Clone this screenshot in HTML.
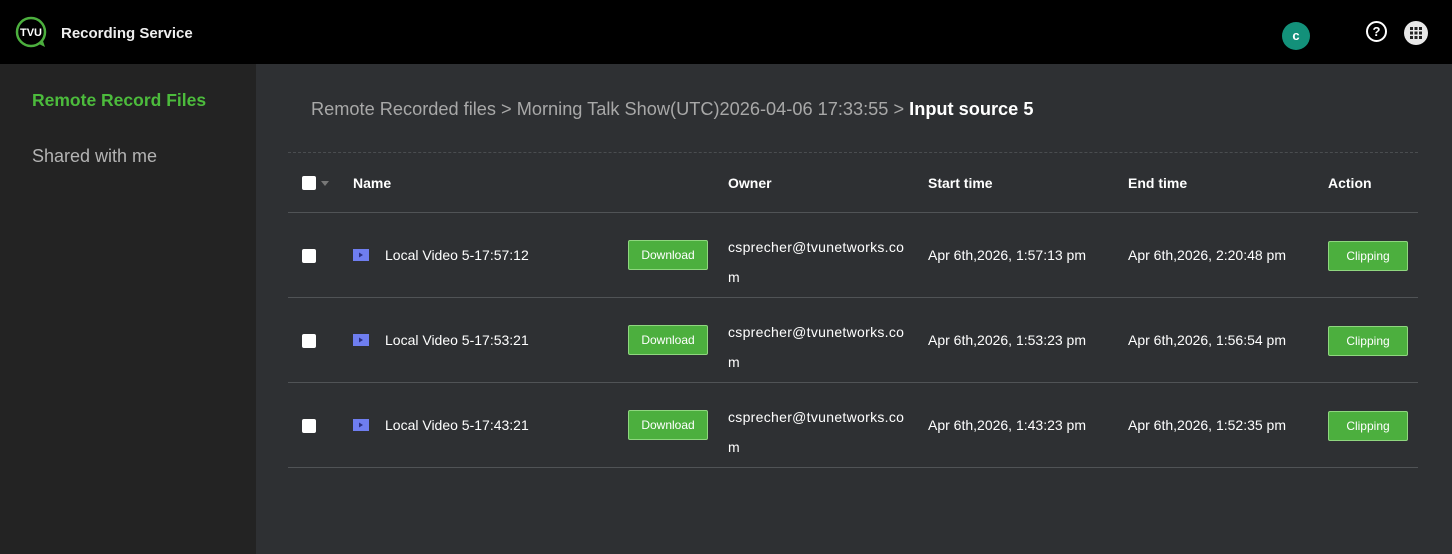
<!DOCTYPE html>
<html><head><style>
*{margin:0;padding:0;box-sizing:border-box}
body{width:1452px;height:554px;background:#2e3033;font-family:"Liberation Sans",sans-serif;overflow:hidden;position:relative;color:#fff}
.top{position:absolute;left:0;top:0;width:1452px;height:64px;background:#000}
.side{position:absolute;left:0;top:64px;width:256px;height:490px;background:#232323}
.abs{position:absolute;white-space:nowrap}
.cb{position:absolute;width:14px;height:14px;background:#fff;border-radius:2px}
.btn{position:absolute;height:30px;width:80px;background:#4caf3e;border:1px solid #8fd67f;border-radius:2px;color:#fff;font-size:12px;text-align:center;line-height:28px}
.line{position:absolute;left:288px;width:1130px;height:1px;background:#505356}
.t{font-size:14px;color:#fff}
.h{font-size:14px;font-weight:bold}
</style></head><body>
<div class="top"></div>
<div class="side"></div>
<svg class="abs" style="left:15px;top:16px" width="34" height="34" viewBox="0 0 34 34"><circle cx="16" cy="16" r="14" fill="none" stroke="#4caf3e" stroke-width="2.5"/><path d="M24 28 L30 31 L28 25Z" fill="#4caf3e"/><text x="16" y="20" font-size="11" fill="#fff" text-anchor="middle" font-family="Liberation Sans" font-weight="bold">TVU</text></svg>
<div class="abs" style="left:61px;top:25px;font-size:15px;font-weight:bold;color:#eee">Recording Service</div>
<div class="abs" style="left:1282px;top:22px;width:28px;height:28px;border-radius:50%;background:#13917a;font-size:13px;font-weight:bold;text-align:center;line-height:28px">c</div>
<div class="abs" style="left:1366px;top:21px;width:21px;height:21px;border-radius:50%;border:2px solid #fff;font-size:13px;font-weight:bold;text-align:center;line-height:17px">?</div>
<div class="abs" style="left:1404px;top:21px;width:24px;height:24px;border-radius:50%;background:#e8e8e8"></div>
<svg class="abs" style="left:1409px;top:26px" width="14" height="14"><g fill="#222"><rect x="1" y="1" width="3" height="3"/><rect x="5.5" y="1" width="3" height="3"/><rect x="10" y="1" width="3" height="3"/><rect x="1" y="5.5" width="3" height="3"/><rect x="5.5" y="5.5" width="3" height="3"/><rect x="10" y="5.5" width="3" height="3"/><rect x="1" y="10" width="3" height="3"/><rect x="5.5" y="10" width="3" height="3"/><rect x="10" y="10" width="3" height="3"/></g></svg>
<div class="abs" style="left:32px;top:90px;font-size:17.5px;font-weight:bold;color:#4cbb3c">Remote Record Files</div>
<div class="abs" style="left:32px;top:146px;font-size:18px;color:#b3b3b3">Shared with me</div>
<div class="abs" style="left:311px;top:99px;font-size:18.2px;color:#a8a8a8">Remote Recorded files &gt; Morning Talk Show(UTC)2026-04-06 17:33:55 &gt; <b style="color:#fff">Input source 5</b></div>
<div class="abs" style="left:288px;top:152px;width:1130px;border-top:1px dashed #4a4d50"></div>
<div class="cb" style="left:302px;top:176px"></div>
<div class="abs" style="left:321px;top:181px;border:4px solid transparent;border-top:5px solid #777"></div>
<div class="abs h" style="left:353px;top:175px">Name</div>
<div class="abs h" style="left:728px;top:175px">Owner</div>
<div class="abs h" style="left:928px;top:175px">Start time</div>
<div class="abs h" style="left:1128px;top:175px">End time</div>
<div class="abs h" style="left:1328px;top:175px">Action</div>
<div class="line" style="top:212px"></div>
<div class="line" style="top:297px"></div>
<div class="line" style="top:382px"></div>
<div class="line" style="top:467px"></div>

<div class="cb" style="left:302px;top:249px"></div>
<svg class="abs" style="left:353px;top:249px" width="16" height="12"><rect width="16" height="12" fill="#6f7ef0"/><path d="M6 3.5 L10 6 L6 8.5Z" fill="#2a2f80"/></svg>
<div class="abs t" style="left:385px;top:247px">Local Video 5-17:57:12</div>
<div class="btn" style="left:628px;top:240px">Download</div>
<div class="abs t" style="left:728px;top:232px;line-height:30px;letter-spacing:0.3px">csprecher@tvunetworks.co<br>m</div>
<div class="abs t" style="left:928px;top:247px">Apr 6th,2026, 1:57:13 pm</div>
<div class="abs t" style="left:1128px;top:247px">Apr 6th,2026, 2:20:48 pm</div>
<div class="btn" style="left:1328px;top:241px">Clipping</div>

<div class="cb" style="left:302px;top:334px"></div>
<svg class="abs" style="left:353px;top:334px" width="16" height="12"><rect width="16" height="12" fill="#6f7ef0"/><path d="M6 3.5 L10 6 L6 8.5Z" fill="#2a2f80"/></svg>
<div class="abs t" style="left:385px;top:332px">Local Video 5-17:53:21</div>
<div class="btn" style="left:628px;top:325px">Download</div>
<div class="abs t" style="left:728px;top:317px;line-height:30px;letter-spacing:0.3px">csprecher@tvunetworks.co<br>m</div>
<div class="abs t" style="left:928px;top:332px">Apr 6th,2026, 1:53:23 pm</div>
<div class="abs t" style="left:1128px;top:332px">Apr 6th,2026, 1:56:54 pm</div>
<div class="btn" style="left:1328px;top:326px">Clipping</div>

<div class="cb" style="left:302px;top:419px"></div>
<svg class="abs" style="left:353px;top:419px" width="16" height="12"><rect width="16" height="12" fill="#6f7ef0"/><path d="M6 3.5 L10 6 L6 8.5Z" fill="#2a2f80"/></svg>
<div class="abs t" style="left:385px;top:417px">Local Video 5-17:43:21</div>
<div class="btn" style="left:628px;top:410px">Download</div>
<div class="abs t" style="left:728px;top:402px;line-height:30px;letter-spacing:0.3px">csprecher@tvunetworks.co<br>m</div>
<div class="abs t" style="left:928px;top:417px">Apr 6th,2026, 1:43:23 pm</div>
<div class="abs t" style="left:1128px;top:417px">Apr 6th,2026, 1:52:35 pm</div>
<div class="btn" style="left:1328px;top:411px">Clipping</div>
</body></html>
